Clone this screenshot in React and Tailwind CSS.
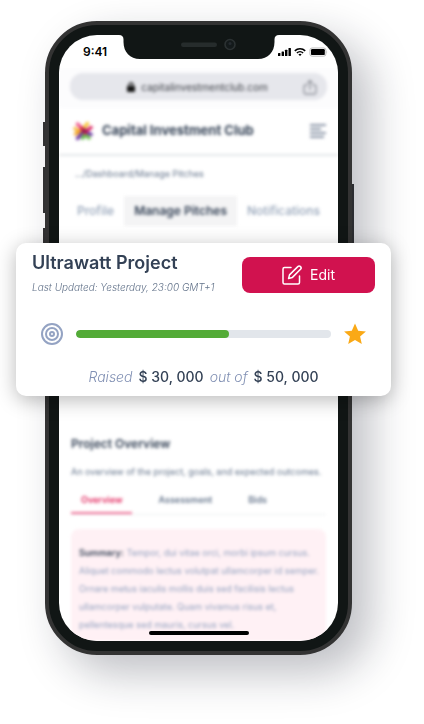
import React, { useState } from 'react';

const pitchTabs = ["Profile", "Manage Pitches", "Notifications"];
const overviewTabs = ["Overview", "Assessment", "Bids"];

const ClubLogo = () => (
  <svg className="w-5 h-5" viewBox="0 0 20 20" fill="none" strokeWidth="3.4" strokeLinecap="round">
    <path d="M2 7.5 L7 11.5" stroke="#f6b93b" />
    <path d="M2.5 13 L9 8" stroke="#f5a623" />
    <path d="M4.5 17.5 L9 12" stroke="#6b2fa0" />
    <path d="M9.5 17 L14 12" stroke="#5cb947" />
    <path d="M11 12 L16 17" stroke="#6cc04a" />
    <path d="M12 10.5 L18 13.5" stroke="#6a35a5" />
    <path d="M18 6.5 L12 11" stroke="#d91c5c" />
    <path d="M14.5 2.5 L10.5 7.5" stroke="#f6c22d" />
    <path d="M4.5 3 L8.5 7" stroke="#f0568b" />
    <path d="M8.5 7 L12 12" stroke="#d3204f" />
    <path d="M10.5 10.5 L12 9" stroke="#8c1d52" />
  </svg>
);

const StatusIcons = () => (
  <svg className="w-[50px] h-3" viewBox="0 0 50 12">
    <rect x="0" y="7" width="2.4" height="3" rx="0.6" />
    <rect x="3.6" y="5.5" width="2.4" height="4.5" rx="0.6" />
    <rect x="7" y="3.7" width="2.4" height="6.3" rx="0.6" />
    <rect x="10.5" y="2" width="2.4" height="8" rx="0.6" />
    <g fill="none" stroke="#000" strokeWidth="1.6">
      <path d="M16.8 4.9 A7.4 7.4 0 0 1 27.2 4.9" />
      <path d="M18.9 7 A4.4 4.4 0 0 1 25.1 7" />
    </g>
    <path d="M20.4 8.4 A2.3 2.3 0 0 1 23.6 8.4 L22 10 Z" />
    <rect x="31.9" y="2" width="16" height="8.2" rx="2.2" fill="none" stroke="#a3a3a3" strokeWidth="0.7" />
    <rect x="33" y="3.1" width="13.8" height="6" rx="1.2" />
    <path d="M48.6 4.8 Q49.8 6.1 48.6 7.4 Z" fill="#a3a3a3" />
  </svg>
);

const Notch = () => (
  <svg className="absolute top-0 left-1/2 -translate-x-1/2 w-40 h-6" viewBox="0 0 160 24">
    <path d="M0 0 Q4.5 0 4.5 4.5 V7 C4.5 17 11 24 21 24 H139 C149 24 155.5 17 155.5 7 V4.5 Q155.5 0 160 0 Z" fill="#111615" />
    <rect x="62" y="7.5" width="36" height="4.5" rx="2.2" fill="#262c2c" />
    <circle cx="111" cy="9.5" r="5" fill="#141a1b" stroke="#2b3132" strokeWidth="1.6" />
    <circle cx="111" cy="8.5" r="1.5" fill="#252b30" />
  </svg>
);

const PhoneScreen = () => {
  const [tab, setTab] = useState("Manage Pitches");
  const [section, setSection] = useState("Overview");

  return (
    <div className="relative bg-white rounded-[38px] overflow-hidden">
      <div className="flex items-center justify-between h-[34px] pl-6 pr-[10px]">
        <span className="text-xs font-semibold text-black">9:41</span>
        <StatusIcons />
      </div>
      <Notch />

      <div className="blur-[1px]">
        {/* Address bar */}
        <div className="bg-[#fcfcfd] px-[11px] pt-1 pb-2 blur-[1px]">
          <div className="flex items-center h-[27px] rounded-[13px] bg-[#e6e7ec] px-[10px]">
            <div className="flex-1 flex items-center justify-center gap-[6px] pl-3">
              <svg className="w-2 h-[10px]" viewBox="0 0 8 10">
                <rect x="0" y="4" width="8" height="6" rx="1" fill="#111" />
                <path d="M2 4.5 V3 a2 2 0 0 1 4 0 V4.5" fill="none" stroke="#111" strokeWidth="1.3" />
              </svg>
              <input
                type="text"
                aria-label="Address"
                defaultValue="capitalinvestmentclub.com"
                className="field-sizing-content bg-transparent text-[10px] leading-4 text-[#3c3f46] outline-none"
              />
            </div>
            <button aria-label="Share">
              <svg className="w-[14px] h-4" viewBox="0 0 14 16" fill="none" stroke="#8e9199" strokeWidth="1.3">
                <path d="M4.5 6 H2.5 a1.5 1.5 0 0 0 -1.5 1.5 V13.5 a1.5 1.5 0 0 0 1.5 1.5 H11.5 a1.5 1.5 0 0 0 1.5 -1.5 V7.5 a1.5 1.5 0 0 0 -1.5 -1.5 H9.5" />
                <path d="M7 11 V1.5 M4.5 4 L7 1.5 L9.5 4" />
              </svg>
            </button>
          </div>
        </div>

        {/* Header */}
        <header className="flex items-center h-12 pl-[14px] pr-3 border-b-2 border-[#e4e8e9] blur-[1px]">
          <ClubLogo />
          <h1 className="flex-1 ml-[9px] text-[13px] font-bold text-[#334155]">Capital Investment Club</h1>
          <button aria-label="Menu">
            <svg className="w-4 h-[14px]" viewBox="0 0 16 14" stroke="#8a94a6" strokeWidth="2">
              <path d="M0 1 H16 M0 5 H11 M0 9 H16 M0 13 H14" />
            </svg>
          </button>
        </header>

        <div className="blur-[1px]">
          <p className="pl-4 pt-[10px] text-[9px] leading-4 text-[#64748b]">.../Dashboard/Manage Pitches</p>

          <nav className="flex items-center justify-between h-[30px] mt-[14px] px-2">
            {pitchTabs.map((name) => (
              <button
                key={name}
                onClick={() => setTab(name)}
                className={`h-full px-[10px] text-xs ${tab === name ? "bg-[#f4f4f5] font-semibold text-[#334155]" : "font-medium text-[#94a3b8]"}`}
              >
                {name}
              </button>
            ))}
          </nav>
        </div>

        {/* Overview */}
        <section className="mt-52 px-3 blur-[1px]">
          <h2 className="text-xs leading-5 font-semibold text-[#334155]">Project Overview</h2>
          <p className="mt-[10px] text-[9px] leading-4 text-[#64748b] whitespace-nowrap">An overview of the project, goals, and expected outcomes.</p>
          <div className="flex gap-4 mt-[10px] border-b border-[#eeeff2]">
            {overviewTabs.map((name) => (
              <button
                key={name}
                onClick={() => setSection(name)}
                className={`px-[10px] pt-1 pb-[6px] text-[9px] leading-3 font-semibold border-b-2 ${section === name ? "border-[#f06d94] text-[#e11d56]" : "border-transparent text-[#64748b]"}`}
              >
                {name}
              </button>
            ))}
          </div>
          <div className="h-28 mt-[14px] pl-2 pt-[15px] rounded-t-lg bg-[#fff1f5] text-[9px] leading-[18px] text-[#94a3c0]">
            <p className="flex gap-[3px]">
              <strong className="font-semibold text-[#334155]">Summary:</strong>
              <span>Tempor, dui vitae orci, morbi ipsum cursus.</span>
            </p>
            <p>
              Aliquet commodo lectus volutpat ullamcorper id semper. Ornare metus iaculis mollis duis sed facilisis lectus ullamcorper vulputate. Quam vivamus risus et, pellentesque sed mauris, cursus vel.
            </p>
          </div>
        </section>
      </div>

      <div className="absolute bottom-[6px] left-1/2 -translate-x-1/2 w-[100px] h-1 rounded-full bg-black"></div>
    </div>
  );
};

const ProjectCard = ({ name, updated, raised, goal }) => {
  const percent = (raised / goal) * 100;
  const money = (value) => `$ ${value / 1000}, 000`;

  return (
    <article className="absolute top-[243px] left-4 right-[33px] rounded-[10px] bg-white px-4 pt-[14px] pb-[7px] shadow-[0_4px_20px_rgba(0,0,0,0.28)]">
      <div className="flex justify-between">
        <div className="-mt-2">
          <h2 className="text-lg leading-7 font-semibold text-[#334155]">{name}</h2>
          <p className="mt-[2px] text-[10px] leading-4 font-light italic text-[#64748b]">Last Updated: {updated}</p>
        </div>
        <button className="flex items-center justify-center gap-2 w-[133px] h-9 rounded-lg bg-[#d1124f] text-white text-sm">
          <svg className="w-5 h-5" viewBox="0 0 20 20" fill="none" stroke="currentColor" strokeWidth="1.5" strokeLinecap="round" strokeLinejoin="round">
            <path d="M9 2.5 H2.5 A1.5 1.5 0 0 0 1 4 V17.5 A1.5 1.5 0 0 0 2.5 19 H16 A1.5 1.5 0 0 0 17.5 17.5 V11" />
            <path d="M15.8 1.6 a1.9 1.9 0 0 1 2.7 2.7 L10.2 12.6 L6.6 13.5 L7.5 9.9 Z" />
          </svg>
          Edit
        </button>
      </div>

      <div className="flex items-center gap-[13px] mt-7 px-[9px]">
        <svg className="w-[22px] h-[22px] shrink-0" viewBox="0 0 22 22" fill="none" stroke="#94a3c3" strokeWidth="2">
          <circle cx="11" cy="11" r="10" />
          <circle cx="11" cy="11" r="6" />
          <circle cx="11" cy="11" r="2" />
        </svg>
        <div
          role="progressbar"
          aria-label="Raised"
          aria-valuenow={percent}
          className="flex-1 h-2 rounded-full bg-[#e2e6eb] overflow-hidden"
        >
          <div className="h-full rounded-full bg-[#53ab37]" style={{ width: `${percent}%` }}></div>
        </div>
        <svg className="w-[22px] h-[22px] shrink-0" viewBox="0 0 22 22" fill="#faa916">
          <path d="M11 0.5 L14.2 7.7 L21.9 8.4 L16.1 13.5 L17.8 21 L11 17.1 L4.2 21 L5.9 13.5 L0.1 8.4 L7.8 7.7 Z" />
        </svg>
      </div>

      <p className="flex justify-center gap-[6px] mt-5 text-sm leading-6">
        <span className="font-light italic text-[#8291b4]">Raised</span>
        <span className="font-medium text-[#334155]">{money(raised)}</span>
        <span className="font-light italic text-[#8291b4]">out of</span>
        <span className="font-medium text-[#334155]">{money(goal)}</span>
      </p>
    </article>
  );
};

const App = () => {
  return (
    <main className="relative min-h-screen overflow-hidden bg-white pt-[21px] pb-16 pl-[45px] pr-[72px] font-['Inter',sans-serif]">
      <div className="relative">
        {/* Side buttons */}
        <div className="absolute -left-[2px] top-[101px] w-1 h-6 bg-[#333]"></div>
        <div className="absolute -left-[2px] top-[146px] w-1 h-[46px] bg-[#333]"></div>
        <div className="absolute -left-[2px] top-[207px] w-1 h-[46px] bg-[#333]"></div>
        <div className="absolute -right-[2px] top-[163px] w-1 h-[74px] bg-[#333]"></div>
        <div className="relative rounded-[52px] border-4 border-[#333] bg-[#111615] p-[10px] shadow-[18px_18px_44px_rgba(20,24,44,0.28)]">
          <PhoneScreen />
        </div>
      </div>
      <ProjectCard name="Ultrawatt Project" updated="Yesterday, 23:00 GMT+1" raised={30000} goal={50000} />
    </main>
  );
};

export default App;
